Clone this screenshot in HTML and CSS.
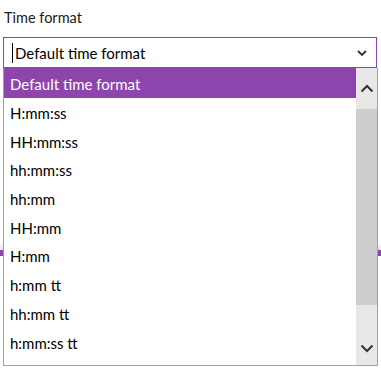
FILE: index.html
```html
<!DOCTYPE html>
<html lang="en">
<head>
  <meta charset="UTF-8">
  <meta name="viewport" content="width=device-width, initial-scale=1.0">
  <title>Time format</title>
  <link rel="stylesheet" href="styles.css">
</head>
<body>
  <div class="field">
    <label class="field-label">Time format</label>
    <div class="combo">
      <span class="caret"></span>
      <span class="combo-value">Default time format</span>
      <svg class="combo-arrow" width="10" height="6" viewBox="0 0 10 6">
        <path d="M1 1 L5 5 L9 1" fill="none" stroke="#333" stroke-width="1.8"/>
      </svg>
    </div>
  </div>

  <!-- ce qui est derriere la liste -->
  <div class="below">
    <div class="accent-bar"></div>
  </div>

  <div class="dropdown">
    <ul class="options">
      <li class="selected">Default time format</li>
      <li>H:mm:ss</li>
      <li>HH:mm:ss</li>
      <li>hh:mm:ss</li>
      <li>hh:mm</li>
      <li>HH:mm</li>
      <li>H:mm</li>
      <li>h:mm tt</li>
      <li>hh:mm tt</li>
      <li>h:mm:ss tt</li>
      <li>h:mm</li>
    </ul>
    <div class="scrollbar">
      <div class="scroll-btn">
        <svg width="14" height="9" viewBox="0 0 14 9">
          <path d="M1.5 7.5 L7 2 L12.5 7.5" fill="none" stroke="#333" stroke-width="2"/>
        </svg>
      </div>
      <div class="scroll-thumb"></div>
      <div class="scroll-btn bottom">
        <svg width="14" height="9" viewBox="0 0 14 9">
          <path d="M1.5 1.5 L7 7 L12.5 1.5" fill="none" stroke="#333" stroke-width="2"/>
        </svg>
      </div>
    </div>
  </div>
</body>
</html>
```

FILE: styles.css
```css
body {
  margin: 0;
  padding: 0;
  background: #fff;
  font-family: Lato, "Open Sans", Arial, sans-serif;
  color: #000;
  width: 381px;
  height: 368px;
  overflow: hidden;
  position: relative;
}
.field {
  padding: 6px 4px 0 3px;
}
.field-label {
  display: block;
  font-size: 14.5px;
  color: #1b1b1b;
  padding-left: 1px;
  height: 23px;
  line-height: 23px;
}
.combo {
  margin-top: 8px;
  height: 29px;
  border: 1px solid #8e44ad;
  display: flex;
  align-items: center;
  padding: 0 9px 0 8px;
  font-size: 15px;
}
.caret {
  width: 1px;
  height: 20px;
  background: #000;
  margin-right: 2px;
}
.combo-value {
  flex: 1;
}
.below {
  padding-top: 182px;
}
.accent-bar {
  height: 6px;
  background: #8e44ad;
  box-shadow: 0 -4px 4px rgba(142, 68, 173, 0.25);
}
.dropdown {
  position: absolute;
  left: 3px;
  top: 68px;
  width: 373px;
  height: 297px;
  border: 1px solid #a0a0a0;
  border-top: none;
  background: #fff;
  display: flex;
  overflow: hidden;
}
.options {
  list-style: none;
  margin: 0;
  padding: 0;
  flex: 1;
  font-size: 15px;
}
.options li {
  height: 28.7px;
  line-height: 30px;
  padding-left: 6px;
}
.options li.selected {
  background: #8e44ad;
  color: #fff;
  height: 30px;
  line-height: 32px;
}
.scrollbar {
  width: 21px;
  background: #e8e8e8;
  display: flex;
  flex-direction: column;
}
.scroll-btn {
  height: 41px;
  display: flex;
  align-items: center;
  justify-content: center;
}
.scroll-btn.bottom {
  height: 60px;
  align-items: flex-end;
  padding-bottom: 12px;
  box-sizing: border-box;
}
.scroll-thumb {
  flex: 1;
  background: #cdcdcd;
}
```
